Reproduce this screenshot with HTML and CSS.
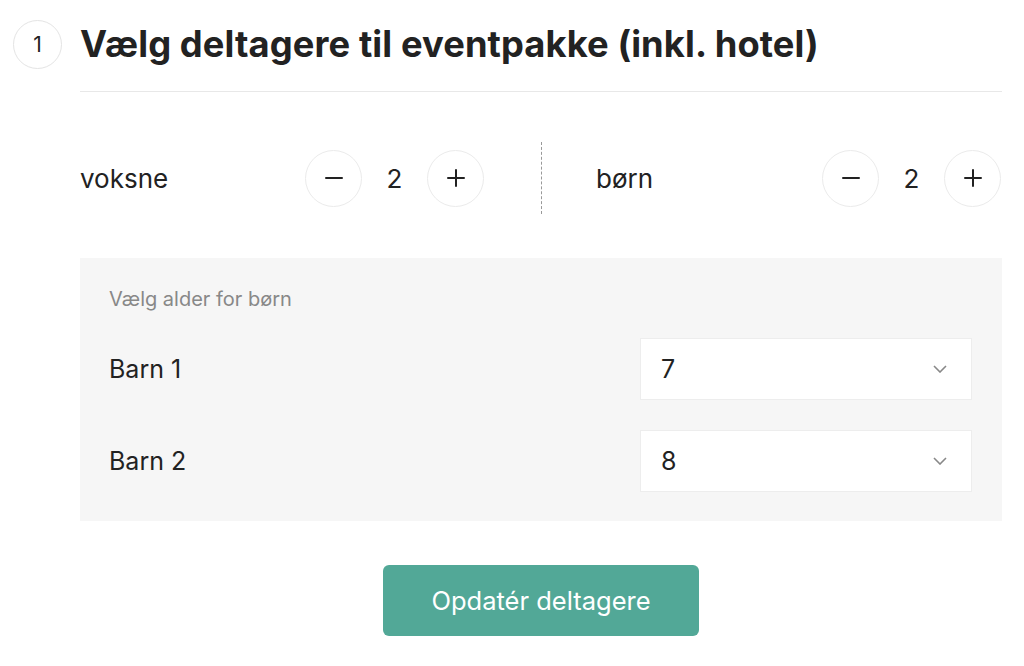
FILE: index.html
```html
<!DOCTYPE html>
<html lang="da">
<head>
  <meta charset="UTF-8">
  <meta name="viewport" content="width=device-width, initial-scale=1.0">
  <title>Deltagere</title>
  <link rel="stylesheet" href="styles.css">
</head>
<body>
  <div class="step">
    <div class="step-header">
      <div class="step-number">1</div>
      <h1>Vælg deltagere til eventpakke (inkl. hotel)</h1>
    </div>

    <div class="step-body">
      <div class="counters">
        <div class="counter">
          <span class="counter-label">voksne</span>
          <div class="counter-controls">
            <button class="round-btn" aria-label="Færre">
              <svg width="20" height="20" viewBox="0 0 20 20"><path d="M2 10h16" stroke="#222" stroke-width="2" stroke-linecap="round"/></svg>
            </button>
            <span class="counter-value">2</span>
            <button class="round-btn" aria-label="Flere">
              <svg width="20" height="20" viewBox="0 0 20 20"><path d="M2 10h16M10 2v16" stroke="#222" stroke-width="2" stroke-linecap="round"/></svg>
            </button>
          </div>
        </div>
        <div class="counter counter-right">
          <span class="counter-label">børn</span>
          <div class="counter-controls">
            <button class="round-btn" aria-label="Færre">
              <svg width="20" height="20" viewBox="0 0 20 20"><path d="M2 10h16" stroke="#222" stroke-width="2" stroke-linecap="round"/></svg>
            </button>
            <span class="counter-value">2</span>
            <button class="round-btn" aria-label="Flere">
              <svg width="20" height="20" viewBox="0 0 20 20"><path d="M2 10h16M10 2v16" stroke="#222" stroke-width="2" stroke-linecap="round"/></svg>
            </button>
          </div>
        </div>
      </div>

      <div class="ages">
        <p class="ages-title">Vælg alder for børn</p>
        <div class="age-row">
          <span class="age-label">Barn 1</span>
          <div class="select">
            <span>7</span>
            <svg width="14" height="8" viewBox="0 0 14 8"><path d="M1 1l6 6 6-6" fill="none" stroke="#888" stroke-width="1.6"/></svg>
          </div>
        </div>
        <div class="age-row">
          <span class="age-label">Barn 2</span>
          <div class="select">
            <span>8</span>
            <svg width="14" height="8" viewBox="0 0 14 8"><path d="M1 1l6 6 6-6" fill="none" stroke="#888" stroke-width="1.6"/></svg>
          </div>
        </div>
      </div>

      <div class="actions">
        <button class="update-btn">Opdatér deltagere</button>
      </div>
    </div>
  </div>
</body>
</html>
```

FILE: styles.css
```css
* {
  margin: 0;
  padding: 0;
  box-sizing: border-box;
}

body {
  background: #fff;
  color: #222;
  font-family: 'Inter', sans-serif;
}

.step {
  padding: 20px 22px 0 13px;
}

.step-header {
  display: flex;
  align-items: center;
  gap: 18px;
}

.step-number {
  width: 49px;
  height: 49px;
  border: 1px solid #e4e4e4;
  border-radius: 50%;
  display: flex;
  align-items: center;
  justify-content: center;
  font-size: 21px;
}

h1 {
  font-size: 36.3px;
  font-weight: 700;
  letter-spacing: 0.1px;
  line-height: 49px;
}

.step-body {
  margin-left: 67px;
}

.counters {
  display: grid;
  grid-template-columns: 1fr 1fr;
  border-top: 1px solid #e8e8e8;
  margin-top: 22px;
  padding: 50px 0 44px;
}

.counter {
  display: flex;
  align-items: center;
  justify-content: space-between;
  padding-right: 57px;
  height: 72px;
}

.counter-right {
  border-left: 1px dashed #999;
  padding: 0 1px 0 54px;
}

.counter-label {
  font-size: 26px;
}

.counter-controls {
  display: flex;
  align-items: center;
}

.round-btn {
  width: 57px;
  height: 57px;
  border: 1px solid #ebebeb;
  border-radius: 50%;
  background: #fff;
  display: flex;
  align-items: center;
  justify-content: center;
  cursor: pointer;
}

.counter-value {
  width: 65px;
  text-align: center;
  font-size: 26px;
}

.ages {
  background: #f6f6f6;
  padding: 28px 30px 29px 29px;
}

.ages-title {
  font-size: 20px;
  color: #888;
  line-height: 26px;
}

.age-row {
  display: flex;
  align-items: center;
  justify-content: space-between;
  margin-top: 26px;
}

.age-row + .age-row {
  margin-top: 30px;
}

.age-label {
  font-size: 25px;
}

.select {
  width: 332px;
  height: 62px;
  background: #fff;
  border: 1px solid #ededed;
  display: flex;
  align-items: center;
  justify-content: space-between;
  padding: 0 24px 0 20px;
  font-size: 25px;
}

.actions {
  display: flex;
  justify-content: center;
  padding-top: 44px;
}

.update-btn {
  width: 316px;
  height: 71px;
  background: #52a897;
  color: #fff;
  border: none;
  border-radius: 6px;
  font-family: 'Inter', sans-serif;
  font-size: 25.5px;
  cursor: pointer;
}
```
